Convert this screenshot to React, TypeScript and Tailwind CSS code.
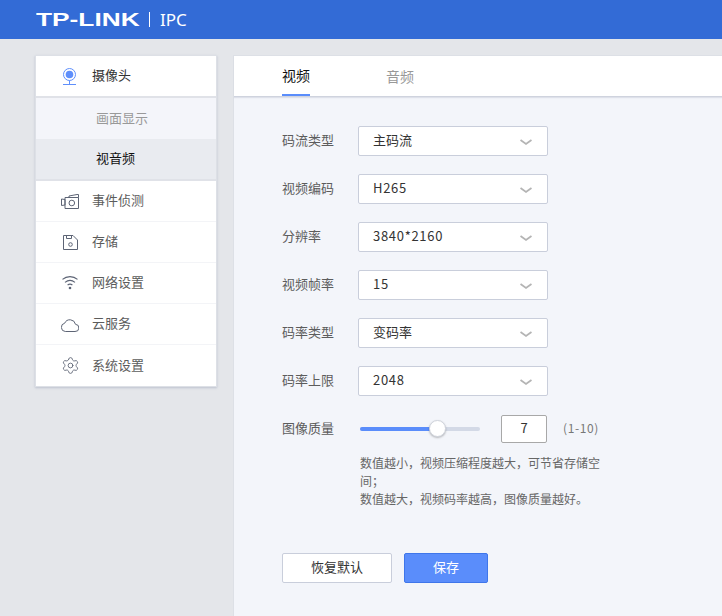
import { Settings } from "lucide-react";

const cjk = "font-['Noto_Sans_CJK_SC','Noto_Sans',sans-serif]";

// Sidebar icons, drawn to match the reference strokes
function CameraIcon() {
  return (
    <svg width="13" height="17" viewBox="0 0 13 17" fill="none" stroke="#5f8ffb" strokeWidth="1">
      <circle cx="6.5" cy="6.5" r="6" />
      <circle cx="6.5" cy="6.500" r="3.800" fill="#5f8ffb" stroke="none" />
      <path d="M6.500 12.500v4M0 16.500h13" />
    </svg>
  );
}

function EventIcon() {
  return (
    <svg width="18" height="15" viewBox="0 0 18 15" fill="none" stroke="#5d6475" strokeWidth="1">
      <path d="M.5 5v6.500l3.500-.5V5.500zM4 3.500h13.500v11H4zM8 3.500V2l8-1.500h1.500v3" />
      <circle cx="10.800" cy="9" r="2.800" />
    </svg>
  );
}

function StorageIcon() {
  return (
    <svg width="15" height="15" viewBox="0 0 15 15" fill="none" stroke="#5d6475" strokeWidth="1">
      <path d="M.5.500h9.500l4.500 4.500v9.500H.5z" />
      <path d="M3.500.500v3h5v-3" />
      <circle cx="7.500" cy="9.500" r="1.800" />
    </svg>
  );
}

function WifiIcon() {
  return (
    <svg width="16" height="14" viewBox="0 0 16 14" fill="none" stroke="#5d6475" strokeWidth="1.2">
      <path d="M.5 3.400C4.800-.2 11.200-.2 15.500 3.400" />
      <path d="M3 6.400c3-2.400 7-2.400 10 0" />
      <path d="M5.600 9c1.400-1 3.400-1 4.800 0" />
      <circle cx="8" cy="12" r="1.300" fill="#5d6475" stroke="none" />
    </svg>
  );
}

function CloudIcon() {
  return (
    <svg width="18" height="15" viewBox="0 0 18 15" fill="none" stroke="#5d6475" strokeWidth="1">
      <path d="M4.300 14.500h9.700a3.600 3.600 0 0 0 .5-7.200A5.700 5.700 0 0 0 3.700 6.200a4.200 4.200 0 0 0 .6 8.300z" />
    </svg>
  );
}

function Chevron() {
  return (
    <svg width="12" height="7" viewBox="0 0 12 7" fill="none" stroke="#b4b4b4" strokeWidth="1.8" className="mt-[3px]">
      <path d="M.5 1 6 5l5.500-4" />
    </svg>
  );
}

const menuItems = [
  { label: "事件侦测", icon: <EventIcon /> },
  { label: "存储", icon: <StorageIcon /> },
  { label: "网络设置", icon: <WifiIcon /> },
  { label: "云服务", icon: <CloudIcon /> },
  { label: "系统设置", icon: <Settings size={19} strokeWidth={1.1} color="#5d6475" /> },
];

const selectRows = [
  { label: "码流类型", value: "主码流" },
  { label: "视频编码", value: "H265" },
  { label: "分辨率", value: "3840*2160" },
  { label: "视频帧率", value: "15" },
  { label: "码率类型", value: "变码率" },
  { label: "码率上限", value: "2048" },
];

function Sidebar() {
  return (
    <div className="ml-[35px] mt-[16px] w-[182px] self-start shrink-0 bg-white border border-[#dde0e6] shadow-[0_1px_2px_rgba(150,160,180,0.5)] flex flex-col">
      <div className="h-[42px] flex items-center border-b-2 border-[#e0e2e8]">
        <div className="w-[13px] ml-[27px] mr-[16px] flex"><CameraIcon /></div>
        <span className="pb-[2px] text-[13px] text-[#333]">摄像头</span>
      </div>
      <div className="h-[41px] flex items-center bg-[#f4f5fa] pl-[60px] pb-[2px] text-[13px] text-[#999]">画面显示</div>
      <div className="h-[42px] flex items-center bg-[#e9ebf0] border-b-2 border-[#e0e2e8] pl-[60px] pb-[2px] text-[13px] text-[#111]">视音频</div>
      {menuItems.map((item) => (
        <div key={item.label} className="h-[41px] flex items-center border-b border-[#f3f4f7] last:border-b-0 text-[13px] text-[#5c5c5c]">
          <div className="w-[24px] ml-[22px] mr-[10px] flex justify-center">{item.icon}</div>
          <span className="pb-[2px]">{item.label}</span>
        </div>
      ))}
    </div>
  );
}

function SelectRow({ label, value }: { label: string; value: string }) {
  const isLatin = /^[\dH]/.test(value);
  return (
    <div className="flex items-center h-[30px]">
      <div className="w-[76px] pb-[2px] text-[13px] text-[#5c5c5c]">{label}</div>
      <div className="w-[190px] h-[30px] bg-white border border-[#c9cedb] rounded-[2px] flex items-center justify-between pl-[14px] pr-[15px]">
        <span className={`pb-[2px] text-[13px] text-[#333] ${isLatin ? "tracking-[0.7px]" : "tracking-normal"}`}>{value}</span>
        <Chevron />
      </div>
    </div>
  );
}

export default function App() {
  return (
    <div className={`w-[722px] h-[616px] overflow-hidden bg-[#e4e6ea] flex flex-col ${cjk}`}>
      <header className="h-[39px] bg-[#336bd6] flex items-center pl-[36px] text-white shrink-0">
        <span className="w-[103px] origin-left scale-x-[1.46] font-['Liberation_Sans',sans-serif] font-bold text-[18px] leading-none">TP-LINK</span>
        <span className="w-px h-[15px] bg-white ml-[10px]" />
        <span className="ml-[10px] text-[17px] leading-none font-['Noto_Sans',sans-serif]">IPC</span>
      </header>

      <div className="flex flex-1 min-h-0">
        <Sidebar />

        <main className="ml-[16px] mt-[16px] flex-1 bg-[#f3f5fa] border-l border-t border-[#dde0e6] flex flex-col">
          <div className="h-[41px] bg-white border-b border-[#cfd3de] shadow-[0_1px_1px_rgba(190,195,210,0.4)] flex pl-[48px] gap-[76px] shrink-0">
            <div className="h-[40px] flex items-center border-b-2 border-[#5a8dfb] text-[14px] text-[#111]">视频</div>
            <div className="h-[40px] flex items-center text-[14px] text-[#999]">音频</div>
          </div>

          <div className="pl-[48px] pt-[29px] flex flex-col">
            <div className="flex flex-col gap-[18px]">
              {selectRows.map((row) => (
                <SelectRow key={row.label} label={row.label} value={row.value} />
              ))}
            </div>

            <div className="flex items-center h-[28px] mt-[19px]">
              <div className="w-[78px] pb-[2px] text-[13px] text-[#5c5c5c]">图像质量</div>
              <div className="relative w-[120px] h-[4px] rounded-full bg-[#d3d9e6]">
                <div className="h-full w-[76px] rounded-full bg-[#5a8dfb]" />
                <div className="absolute left-[69px] top-[-7px] w-[17px] h-[17px] rounded-full bg-white border border-[#d0d4dc] shadow-[0_1px_2px_rgba(0,0,0,0.25)]" />
              </div>
              <div className="ml-[21px] w-[46px] h-[28px] pb-[2px] bg-white border border-[#a8a8a8] rounded-[2px] flex items-center justify-center text-[13px] text-[#333]">7</div>
              <div className="ml-[16px] pb-[2px] text-[12px] text-[#777] tracking-[0.6px]">(1-10)</div>
            </div>

            <div className="ml-[78px] mt-[11px] w-[244px] text-[12px] leading-[18px] text-[#666]">
              <p>数值越小，视频压缩程度越大，可节省存储空间；</p>
              <p>数值越大，视频码率越高，图像质量越好。</p>
            </div>

            <div className="flex gap-[12px] mt-[45px]">
              <button className="w-[110px] h-[30px] pb-[2px] bg-white border border-[#c9cedb] rounded-[2px] text-[13px] text-[#333]">恢复默认</button>
              <button className="w-[84px] h-[30px] pb-[2px] bg-[#5a8dfb] border border-[#3f76ea] rounded-[2px] text-[13px] text-white">保存</button>
            </div>
          </div>
        </main>
      </div>
    </div>
  );
}
